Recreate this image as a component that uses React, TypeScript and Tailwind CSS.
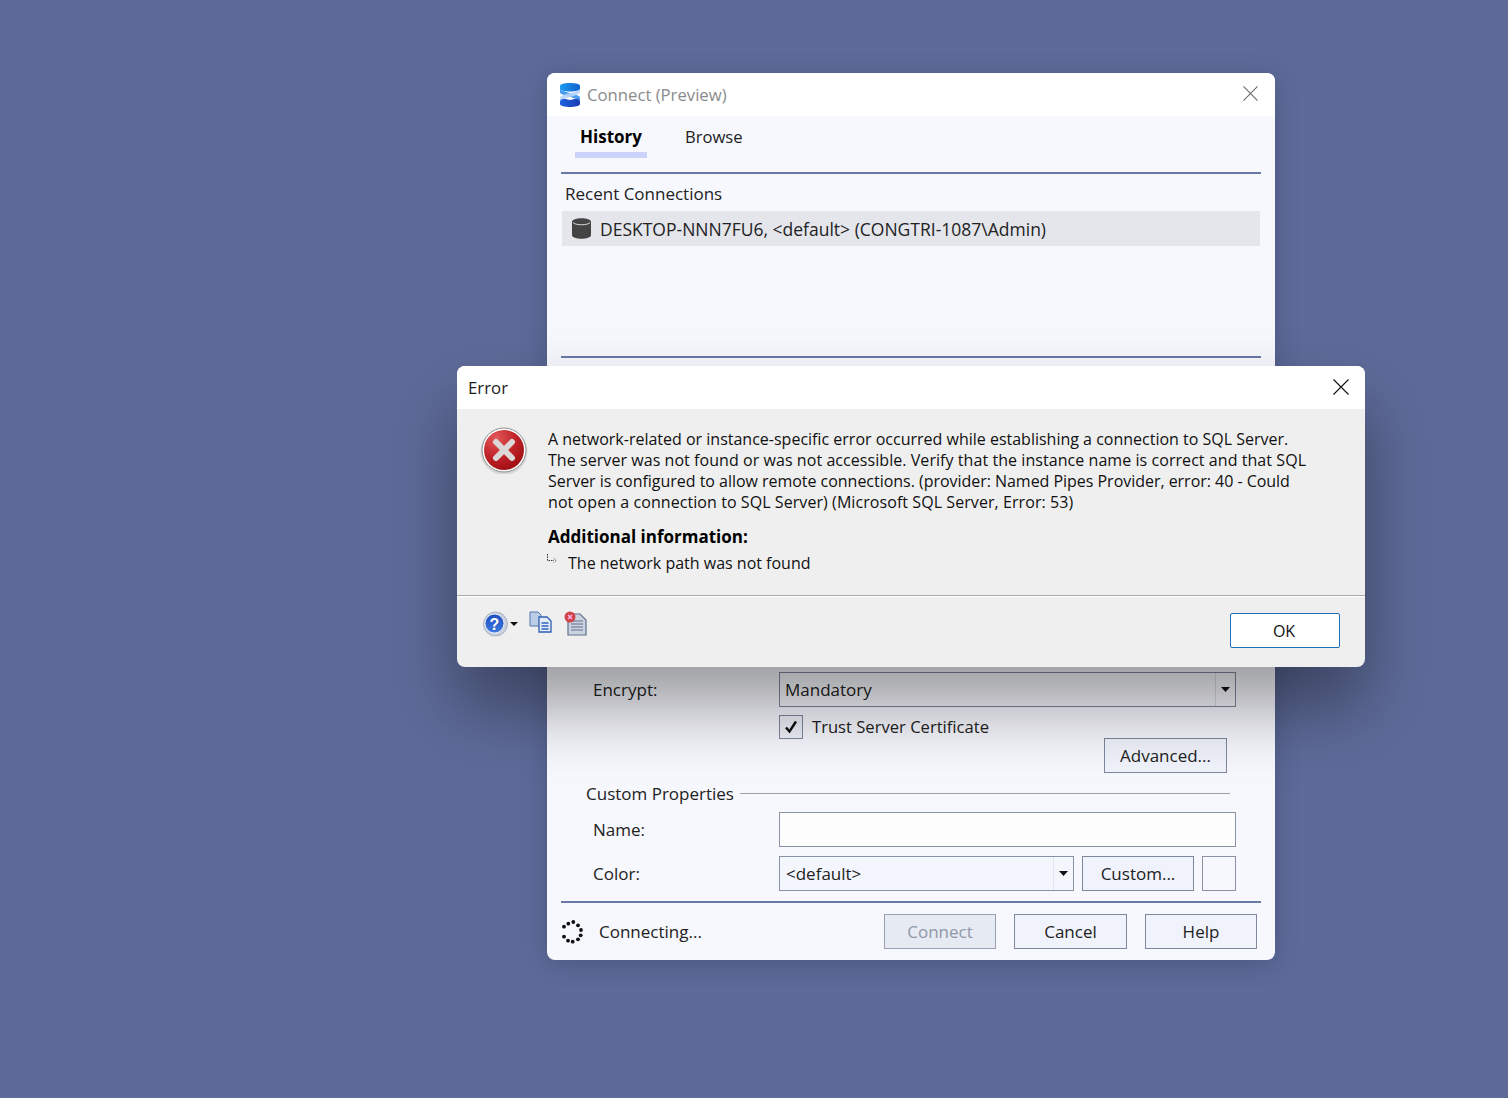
import React from 'react';

const font = { fontFamily: '"Open Sans", "Noto Sans", sans-serif' };

const Caret = () => (
  <svg width="9" height="5" viewBox="0 0 9 5"><path d="M0 0h9L4.500 5z" fill="#111" /></svg>
);

const CloseIcon = ({ color, size }: { color: string; size: number }) => (
  <svg width={size} height={size} viewBox="0 0 16 16" fill="none" stroke={color} strokeWidth="1.1">
    <path d="M0.5 0.5L15.500 15.500M15.500 0.500L0.500 15.500" />
  </svg>
);

const Logo = () => (
  <svg width="20" height="24" viewBox="0 0 20 24">
    <defs>
      <linearGradient id="lgTop" x1="0" y1="0" x2="1" y2="0">
        <stop offset="0" stopColor="#1a9bf0" />
        <stop offset="1" stopColor="#1560d0" />
      </linearGradient>
      <linearGradient id="lgBot" x1="0" y1="0" x2="1" y2="0">
        <stop offset="0" stopColor="#1f62e0" />
        <stop offset="1" stopColor="#1a3cae" />
      </linearGradient>
    </defs>
    <path d="M0 6C4 9.500 16 10.500 20 14V18C16 14.500 4 13.500 0 10z" fill="#4a9cf0" />
    <path d="M20 6C16 9.500 4 10.500 0 14V18C4 14.500 16 13.500 20 10z" fill="#b9d5fa" opacity="0.9" />
    <path d="M0 3C0 1 4 0 10 0S20 1 20 3V5.500C20 7.500 15 8.500 10 8.500S0 7.500 0 5.500z" fill="url(#lgTop)" />
    <path d="M0 18.500C0 17 2 16 5 15.800C8 17.300 12 17.300 15 15.800C18 16 20 17 20 18.500V21C20 23 15 24 10 24S0 23 0 21z" fill="url(#lgBot)" />
  </svg>
);

const ErrorIcon = () => (
  <svg width="48" height="48" viewBox="0 0 48 48">
    <defs>
      <radialGradient id="er" cx="0.3" cy="0.2" r="0.95">
        <stop offset="0" stopColor="#e2585a" />
        <stop offset="0.5" stopColor="#c0242a" />
        <stop offset="1" stopColor="#98090d" />
      </radialGradient>
    </defs>
    <circle cx="24" cy="25.500" r="23.500" fill="#000" opacity="0.1" />
    <circle cx="24" cy="24" r="22" fill="#fff" stroke="#8f8f8f" strokeWidth="1" />
    <circle cx="24" cy="24" r="20" fill="url(#er)" />
    <path d="M16 16L32 32M32 16L16 32" stroke="#dcd8d8" strokeWidth="6" strokeLinecap="round" />
  </svg>
);

const HelpIcon = () => (
  <svg width="25" height="26" viewBox="0 0 25 26">
    <defs>
      <linearGradient id="hp" x1="0" y1="0" x2="0" y2="1">
        <stop offset="0" stopColor="#1e4fc0" />
        <stop offset="1" stopColor="#3d78e0" />
      </linearGradient>
    </defs>
    <circle cx="12.500" cy="13" r="12" fill="#c9d0da" stroke="#aab4c2" />
    <circle cx="11.500" cy="12.500" r="9.500" fill="url(#hp)" stroke="#fff" strokeWidth="0.800" />
    <text x="11.500" y="18.500" textAnchor="middle" fontSize="16" fontWeight="700" fill="#fff" fontFamily="Liberation Sans, sans-serif">?</text>
  </svg>
);

const CopyIcon = () => (
  <svg width="24" height="22" viewBox="0 0 24 22">
    <path d="M1 1h8l3 3v11H1z" fill="#bccde8" stroke="#5577ad" />
    <path d="M10 6h8l4 4v11H10z" fill="#e4ecf8" stroke="#2f5fb0" strokeWidth="1.300" />
    <path d="M12.500 12h7M12.500 15h7M12.500 18h7" stroke="#2f66c0" strokeWidth="1.300" />
  </svg>
);

const ClearIcon = () => (
  <svg width="24" height="25" viewBox="0 0 24 25">
    <path d="M4 3h12l6 6v15H4z" fill="#cbd3df" stroke="#5f7090" strokeWidth="1.200" />
    <path d="M7 10h12M7 13h12M7 16h12M7 19h12" stroke="#5f7090" />
    <circle cx="6" cy="6" r="5.500" fill="#d2424c" />
    <path d="M4 4l4 4M8 4l-4 4" stroke="#fbe" strokeWidth="1.300" />
  </svg>
);

const spinnerDots = [
  [8, 10.700], [12.300, 7.700], [17.300, 6], [22, 9.300], [25, 14],
  [24.700, 19.300], [22, 23.300], [16.700, 25.700], [12, 24.700], [8, 20.700],
];

const Spinner = () => (
  <svg width="32" height="32" viewBox="0 0 32 32">
    {spinnerDots.map(([x, y]) => (
      <circle key={`${x}-${y}`} cx={x} cy={y} r="1.900" fill="#111" />
    ))}
  </svg>
);

const Btn = ({ label, w, disabled }: { label: string; w: string; disabled?: boolean }) => (
  <div
    className={`${w} h-[35px] border flex items-center justify-center text-[17px] ${
      disabled ? 'border-[#98a2b2] bg-[#e6eaf2] text-[#8f98a8]' : 'border-[#7e899e] bg-[#f0f3fb] text-[#222]'
    }`}
  >
    <span className="pt-[1px]">{label}</span>
  </div>
);

export default function App() {
  return (
    <div className="relative w-[1508px] h-[1098px] overflow-hidden bg-[#5e6b99] text-[#222]" style={font}>
      {/* back window */}
      <div className="absolute left-[547px] top-[73px] w-[728px] h-[887px] rounded-[8px] overflow-hidden bg-[#f7f8fe] flex flex-col shadow-[0_4px_26px_rgba(30,40,70,0.3)]">
        <div className="h-[43px] bg-white flex items-center pl-[13px] pr-[17px] shrink-0">
          <Logo />
          <span className="ml-[7px] text-[16.700px] text-[#8b8b8b]">Connect (Preview)</span>
          <span className="ml-auto flex -mt-[2px]"><CloseIcon color="#666" size={15} /></span>
        </div>

        <div className="h-[58px] mx-[14px] border-b-2 border-[#6a78a8] flex items-start shrink-0">
          <div className="ml-[14px] w-[72px] h-[42px] border-b-[6px] border-[#ccd3fb] flex items-center justify-center text-[17px] font-bold text-black pt-[5px]">History</div>
          <div className="ml-[38px] h-[42px] flex items-center text-[16.600px] text-[#222]">Browse</div>
        </div>

        <div className="ml-[18px] mt-[8px] h-[23px] flex items-center text-[17px] text-[#222] shrink-0">Recent Connections</div>
        <div className="mx-[15px] mt-[6px] h-[35px] bg-[#e4e6ec] flex items-center pl-[10px] shrink-0">
          <svg width="19" height="21" viewBox="0 0 19 21">
            <path d="M0 4c0-5 19-5 19 0v13c0 5-19 5-19 0z" fill="#444" />
            <path d="M1 4.500c2 3 15 3 17 0" fill="none" stroke="#ddd" strokeWidth="1" />
          </svg>
          <span className="ml-[9px] text-[17.500px] text-[#222] pt-[1px]">DESKTOP-NNN7FU6, &lt;default&gt; (CONGTRI-1087\Admin)</span>
        </div>

        <div className="mx-[14px] mt-[110px] h-[2px] bg-[#6a78a8] shrink-0" />
        <div className="h-[314px] shrink-0" />

        <div className="flex items-center h-[35px] shrink-0">
          <span className="ml-[46px] w-[186px] text-[17px]">Encrypt:</span>
          <div className="w-[457px] h-[35px] border border-[#7e899e] flex items-center pl-[5px] text-[17px]">
            Mandatory
            <span className="ml-auto w-[20px] h-full flex items-center justify-center border-l border-[#d8dbe3]"><Caret /></span>
          </div>
        </div>
        <div className="flex items-center mt-[8px] ml-[232px] h-[24px] shrink-0">
          <div className="w-[24px] h-[24px] border border-[#7e899e] bg-[#eef1f9] flex items-center justify-center">
            <svg width="14" height="14" viewBox="0 0 14 14"><path d="M2 7.500l3.500 4L12 1.500" fill="none" stroke="#111" strokeWidth="2.400" /></svg>
          </div>
          <span className="ml-[9px] text-[16.600px] pt-[1px]">Trust Server Certificate</span>
        </div>
        <div className="flex justify-end mr-[48px] -mt-[1px] shrink-0"><Btn label="Advanced..." w="w-[123px]" /></div>

        <div className="flex items-center mt-[9px] ml-[39px] mr-[45px] h-[23px] shrink-0">
          <span className="text-[17px]">Custom Properties</span>
          <div className="ml-[6px] flex-1 h-px bg-[#9aa2b0]" />
        </div>
        <div className="flex items-center mt-[7px] h-[35px] shrink-0">
          <span className="ml-[46px] w-[186px] text-[17px]">Name:</span>
          <div className="w-[457px] h-[35px] border border-[#8993a6] bg-[#fdfdfd]" />
        </div>
        <div className="flex items-center mt-[9px] h-[35px] shrink-0">
          <span className="ml-[46px] w-[186px] text-[17px]">Color:</span>
          <div className="w-[295px] h-[35px] border border-[#8993a6] flex items-center pl-[6px] text-[17px] bg-[#f3f6fd]">
            &lt;default&gt;
            <span className="ml-auto w-[20px] h-full flex items-center justify-center border-l border-[#e4e6ec]"><Caret /></span>
          </div>
          <div className="ml-[8px]"><Btn label="Custom..." w="w-[112px]" /></div>
          <div className="ml-[8px] w-[34px] h-[35px] border border-[#8993a6]" />
        </div>

        <div className="mx-[14px] mt-[10px] h-[2px] bg-[#6a78a8] shrink-0" />
        <div className="flex items-center mt-[11px] h-[35px] shrink-0">
          <span className="ml-[9px] flex"><Spinner /></span>
          <span className="ml-[11px] text-[17px] pt-[1px]">Connecting...</span>
          <div className="ml-auto mr-[18px] flex gap-[18px]">
            <Btn label="Connect" w="w-[112px]" disabled />
            <Btn label="Cancel" w="w-[113px]" />
            <Btn label="Help" w="w-[112px]" />
          </div>
        </div>
      </div>

      {/* error dialog */}
      <div className="absolute left-[457px] top-[366px] w-[908px] h-[301px] rounded-[8px] overflow-hidden bg-[#efefef] flex flex-col shadow-[0_40px_70px_rgba(0,0,0,0.38)]">
        <div className="h-[43px] bg-white flex items-center pl-[11px] pr-[16px] shrink-0">
          <span className="text-[16.800px] text-[#222]">Error</span>
          <span className="ml-auto flex -mt-[2px]"><CloseIcon color="#111" size={16} /></span>
        </div>
        <div className="flex h-[187px] border-b border-[#a9a9a9] shrink-0">
          <div className="ml-[23px] mt-[17px] flex shrink-0 self-start"><ErrorIcon /></div>
          <div className="ml-[20px] mt-[20px] w-[775px] text-[16px] leading-[21px] text-[#111] whitespace-nowrap">
            <p>A network-related or instance-specific error occurred while establishing a connection to SQL Server.</p>
            <p className="tracking-[0.060px]">The server was not found or was not accessible. Verify that the instance name is correct and that SQL</p>
            <p className="tracking-[-0.030px]">Server is configured to allow remote connections. (provider: Named Pipes Provider, error: 40 - Could</p>
            <p className="tracking-[0.070px]">not open a connection to SQL Server) (Microsoft SQL Server, Error: 53)</p>
            <p className="mt-[13px] text-[17px] font-bold text-black">Additional information:</p>
            <div className="mt-[6px] flex items-center">
              <svg width="12" height="12" viewBox="0 0 12 12" className="-mt-[8px] -ml-[2px]">
                <path d="M1.500 0v6.500H8M8 4.500l2 2-2 2" fill="none" stroke="#333" strokeWidth="1" strokeDasharray="1.500 1" />
              </svg>
              <span className="ml-[10px]">The network path was not found</span>
            </div>
          </div>
        </div>
        <div className="flex-1 border-t border-white flex items-start">
          <div className="ml-[26px] mt-[14px] flex items-center">
            <HelpIcon />
            <span className="ml-[2px] flex"><svg width="8" height="4" viewBox="0 0 8 4"><path d="M0 0h8L4 4z" fill="#111" /></svg></span>
            <span className="ml-[11px] -mt-[4px] flex"><CopyIcon /></span>
            <span className="ml-[11px] -mt-[2px] flex"><ClearIcon /></span>
          </div>
          <div className="ml-auto mr-[25px] mt-[16px] w-[110px] h-[35px] border border-[#1f6fb8] rounded-[2px] bg-white flex items-center justify-center text-[16px] text-[#111] pr-[2px]">OK</div>
        </div>
      </div>
    </div>
  );
}
